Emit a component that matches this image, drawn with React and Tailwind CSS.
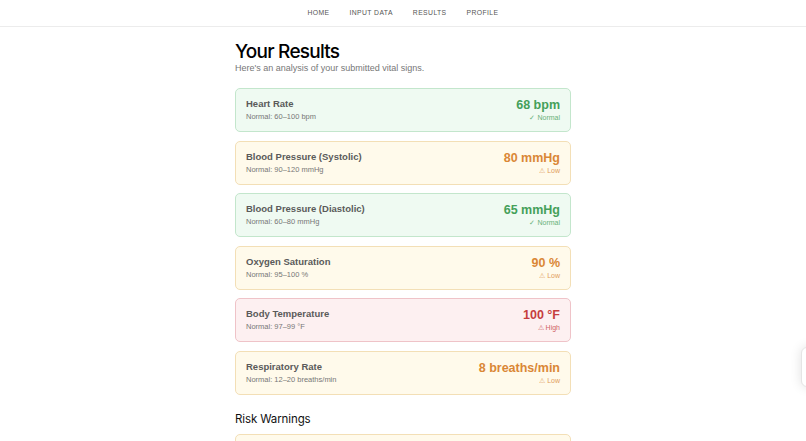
import React from "react";

const vitals = [
  { name: "Heart Rate", range: "Normal: 60–100 bpm", value: "68 bpm", status: "normal" },
  { name: "Blood Pressure (Systolic)", range: "Normal: 90–120 mmHg", value: "80 mmHg", status: "low" },
  { name: "Blood Pressure (Diastolic)", range: "Normal: 60–80 mmHg", value: "65 mmHg", status: "normal" },
  { name: "Oxygen Saturation", range: "Normal: 95–100 %", value: "90 %", status: "low" },
  { name: "Body Temperature", range: "Normal: 97–99 °F", value: "100 °F", status: "high" },
  { name: "Respiratory Rate", range: "Normal: 12–20 breaths/min", value: "8 breaths/min", status: "low" },
];

const styles = {
  normal: {
    card: "bg-[#effaf2] border-[#c3e6cc]",
    value: "text-[#45a05a]",
    label: "✓ Normal",
  },
  low: {
    card: "bg-[#fffaeb] border-[#f3dfb6]",
    value: "text-[#da8736]",
    label: "⚠ Low",
  },
  high: {
    card: "bg-[#fdf0f1] border-[#efc3c8]",
    value: "text-[#c63d3d]",
    label: "⚠ High",
  },
};

function VitalCard({ vital }) {
  const s = styles[vital.status];
  return (
    <div className={"flex justify-between items-start h-[44px] rounded-[5px] border px-[10px] pt-[9px] " + s.card}>
      <div>
        <div className="text-[9.5px] font-bold text-[#5a5a5a] leading-[12px]">{vital.name}</div>
        <div className="text-[7.5px] text-[#777] mt-[2px] leading-[10px]">{vital.range}</div>
      </div>
      <div className="text-right">
        <div className={"text-[12.5px] font-bold leading-[14px] " + s.value}>{vital.value}</div>
        <div className={"text-[7px] mt-[1px] leading-[10px] opacity-80 " + s.value}>{s.label}</div>
      </div>
    </div>
  );
}

export default function App() {
  return (
    <div className="relative h-[441px] bg-white overflow-hidden" style={{ fontFamily: "'Liberation Sans', Arial, sans-serif" }}>
      <nav className="h-[27px] border-b border-[#ececec] flex justify-center items-center gap-[20px] text-[6.8px] tracking-[0.06em] text-[#555]">
        <span>HOME</span>
        <span>INPUT DATA</span>
        <span>RESULTS</span>
        <span>PROFILE</span>
      </nav>

      <main className="w-[336px] mx-auto pt-[14px]">
        <h1 className="text-[19px] font-medium tracking-[-0.04em] text-black leading-[22px]" style={{ fontFamily: "Inter, sans-serif" }}>
          Your Results
        </h1>
        <p className="text-[9px] text-[#777] leading-[10px]">Here's an analysis of your submitted vital signs.</p>

        <div className="mt-[15px] flex flex-col gap-[8.5px]">
          {vitals.map((v) => (
            <VitalCard key={v.name} vital={v} />
          ))}
        </div>

        <h2 className="mt-[17px] text-[11.5px] text-[#111] tracking-[-0.01em] leading-[14px]" style={{ fontFamily: "Inter, sans-serif" }}>
          Risk Warnings
        </h2>
        <div className="mt-[8px] h-[30px] rounded-[5px] border border-[#f3dfb6] bg-[#fffaeb]"></div>
      </main>

      <div className="absolute left-[801px] top-[347px] w-[30px] h-[40px] rounded-[6px] bg-white border border-[#e5e5e5] shadow-[0_0_12px_rgba(0,0,0,0.12)]"></div>
    </div>
  );
}
